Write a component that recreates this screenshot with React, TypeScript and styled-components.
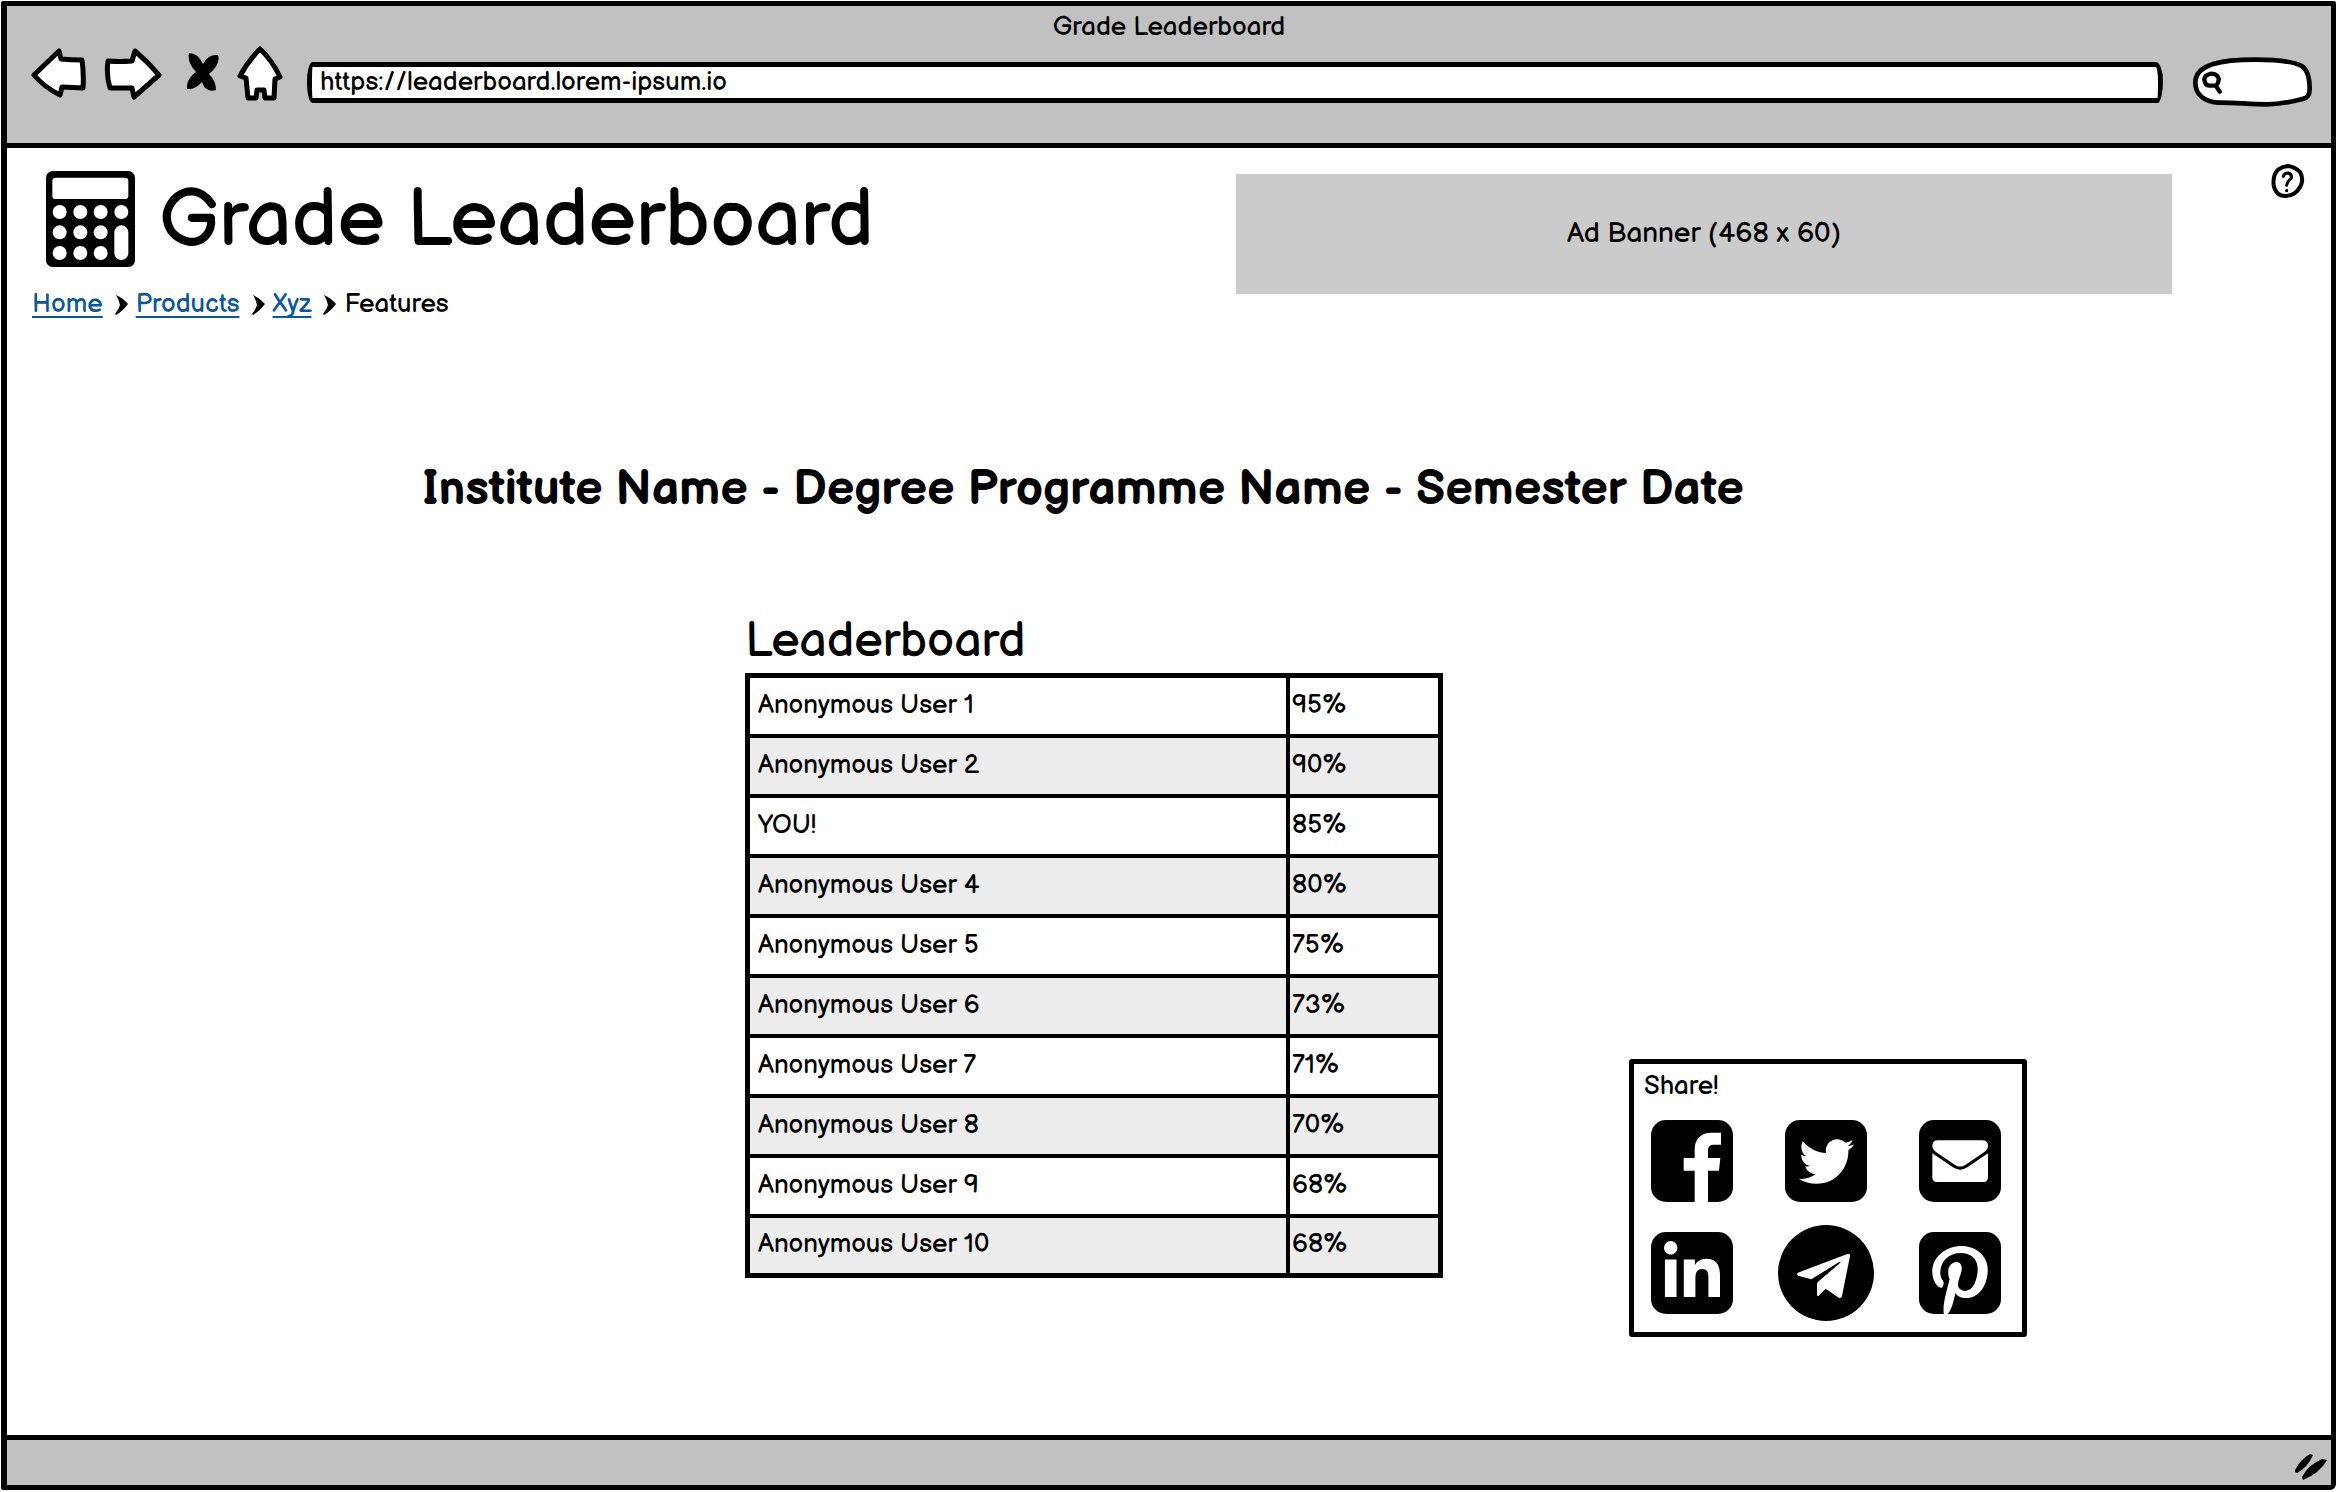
import React from "react";
import styled, { createGlobalStyle } from "styled-components";
import { FaTwitter, FaLinkedinIn, FaPinterestP } from "react-icons/fa";

const ink = "#000";
const chrome = "#c1c1c1";
const stripe = "#ededed";
const link = "#0b5599";

const GlobalStyle = createGlobalStyle`
  *, *::before, *::after { box-sizing: border-box; }
  body {
    margin: 0;
    background: #fff;
    color: ${ink};
    font-family: "Balsamiq Sans", Lato, "Open Sans", sans-serif;
    font-size: 26px;
    line-height: 32px;
  }
  button, input { font: inherit; color: inherit; }
  h1, h2, p { margin: 0; }
`;

const Page = styled.div`
  display: flex;
  min-height: 100vh;
  padding: 1px 2px 2px 1px;
`;

const Window = styled.div`
  display: flex;
  flex: 1;
  flex-direction: column;
  border: solid ${ink};
  border-width: 5px 5px 5px 6px;
  border-radius: 2px 2px 6px 2px;
  background: #fff;
`;

const Chrome = styled.header`
  background: ${chrome};
  border-bottom: 5px solid ${ink};
  padding: 6px 0 31px;
`;

const WindowTitle = styled.p`
  text-align: center;
`;

const Toolbar = styled.div`
  display: flex;
  align-items: center;
  margin-top: 8px;
  padding: 0 19px 0 24px;
  height: 60px;
`;

const ToolGroup = styled.div`
  display: flex;
  align-items: center;
  gap: 17px;
  margin-right: 24px;
  padding-bottom: 17px;
`;

const IconButton = styled.button<{ $stop?: boolean }>`
  display: flex;
  padding: 0;
  border: 0;
  background: none;
  cursor: pointer;
  margin: ${(p) => (p.$stop ? "0 0 4px 8px" : "0")};
`;

const UrlInput = styled.input`
  flex: 1;
  min-width: 0;
  height: 41px;
  padding: 0 8px;
  border: 5px solid ${ink};
  border-radius: 6px 8px 6px 6px / 20px 20px 24px 20px;
  background: #fff;
  outline: none;
`;

const SearchBox = styled.label`
  position: relative;
  display: flex;
  align-items: center;
  width: 119px;
  height: 50px;
  margin-left: 30px;
  padding-left: 9px;
`;

const SearchInput = styled.input`
  position: relative;
  width: 76px;
  height: 28px;
  padding: 0;
  border: 0;
  background: transparent;
  outline: none;
`;

const Body = styled.main`
  flex: 1;
`;

const Masthead = styled.div`
  display: grid;
  grid-template-columns: 1229fr 936fr 159fr;
`;

const Brand = styled.div`
  padding-top: 23px;
`;

const BrandRow = styled.div`
  display: flex;
  align-items: center;
  gap: 24px;
  padding-left: 39px;
`;

const SiteName = styled.h1`
  padding-top: 4px;
  font-size: 80px;
  font-weight: 400;
  line-height: 92px;
  white-space: nowrap;
`;

const Crumbs = styled.nav`
  display: flex;
  align-items: center;
  gap: 8px;
  margin-top: 22px;
  padding-left: 25px;
`;

const Crumb = styled.a`
  color: ${link};
  text-decoration: underline;
  text-decoration-thickness: 2px;
  text-underline-offset: 4px;
  text-decoration-skip-ink: none;
`;

const AdBanner = styled.aside`
  display: flex;
  align-items: center;
  justify-content: center;
  height: 120px;
  margin-top: 26px;
  background: #cbcbcb;
  font-size: 28px;
`;

const HelpCell = styled.div`
  display: flex;
  align-items: flex-start;
  justify-content: flex-end;
  padding: 15px 26px 0 0;
`;

const CourseTitle = styled.h2`
  margin-top: 139px;
  padding-right: 172px;
  font-size: 48px;
  font-weight: 700;
  line-height: 60px;
  text-align: center;
`;

const Columns = styled.div`
  display: grid;
  grid-template-columns: 738fr 698fr 186fr 398fr 304fr;
  margin-top: 92px;
  padding-bottom: 40px;
`;

const Board = styled.section`
  grid-column: 2;
`;

const BoardTitle = styled.h2`
  font-size: 48px;
  font-weight: 400;
  line-height: 60px;
`;

const Table = styled.table`
  width: 100%;
  margin-top: 1px;
  border: 5px solid ${ink};
  border-collapse: collapse;
  table-layout: fixed;
`;

const NameCol = styled.col`
  width: 78%;
`;

const Row = styled.tr`
  height: 60px;
  &:nth-child(even) { background: ${stripe}; }
`;

const Cell = styled.td<{ $inset: number }>`
  padding: 0 0 0 ${(p) => p.$inset}px;
  border: 4px solid ${ink};
`;

const Share = styled.section`
  grid-column: 4;
  align-self: end;
  height: 278px;
  margin-bottom: -59px;
  padding: 7px 10px;
  border: 5px solid ${ink};
  border-radius: 3px;
`;

const ShareGrid = styled.div`
  display: grid;
  grid-template-columns: repeat(3, 96px);
  grid-auto-rows: 96px;
  gap: 16px 38px;
  margin-top: 10px;
  place-items: center;
`;

const ShareButton = styled.button<{ $round?: boolean }>`
  display: flex;
  align-items: center;
  justify-content: center;
  width: ${(p) => (p.$round ? 96 : 82)}px;
  height: ${(p) => (p.$round ? 96 : 82)}px;
  padding: 0;
  overflow: hidden;
  border: 0;
  border-radius: ${(p) => (p.$round ? "50%" : "15px")};
  background: ${ink};
  color: #fff;
  cursor: pointer;
`;

const PinMark = styled(FaPinterestP)`
  width: 56px;
  height: 74px;
  margin-top: 18px;
`;

const StatusBar = styled.footer`
  display: flex;
  align-items: center;
  justify-content: flex-end;
  height: 50px;
  padding: 8px 4px 0 0;
  border-top: 5px solid ${ink};
  background: ${chrome};
`;

const PillShape = styled.svg`
  position: absolute;
  inset: 0;
  width: 100%;
  height: 100%;
`;

const Glass = styled.svg`
  position: relative;
`;

const outline = {
  fill: "#fff",
  stroke: ink,
  strokeWidth: 5,
  strokeLinejoin: "round" as const,
  strokeLinecap: "round" as const,
};

const BackIcon = () => (
  <svg width="56" height="52" viewBox="31 48 56 52" {...outline}>
    <path d="M34 75 L59 51 L61 59 Q71 60 82 60 Q84 74 83 88 L62 87 L60 95 Q44 87 34 75Z" />
  </svg>
);

const ForwardIcon = () => (
  <svg width="58" height="54" viewBox="105 47 58 54" {...outline}>
    <path d="M109 61 Q120 62 133 61 L136 51 Q149 62 160 75 L135 97 L133 88 L111 88 Q107 75 109 61Z" />
  </svg>
);

const StopIcon = () => (
  <svg width="33" height="40" viewBox="188 51 33 40" fill={ink}>
    <path d="M190 52 Q199 52 204 63 Q209 53 219 54 Q222 63 210 73 Q217 80 217 89 Q206 92 203 81 Q196 89 188 88 Q187 78 197 71 Q188 62 190 52Z" />
  </svg>
);

const HomeIcon = () => (
  <svg width="46" height="55" viewBox="237 46 46 55" {...outline}>
    <path d="M260 49 Q272 60 280 77 L275 79 L274 98 L265 98 L264 90 L257 90 L256 98 L248 98 L246 78 L240 76 Q248 61 260 49Z" />
  </svg>
);

const SearchOutline = () => (
  <PillShape viewBox="400 170 356 150" preserveAspectRatio="none" aria-hidden="true">
    <path
      d="M475 307 C430 302 407 280 407 247 C407 190 490 178 586 178 C640 178 700 183 725 197 C746 210 749 240 749 266 C749 284 743 293 730 295 C690 306 660 312 620 312 C570 312 520 306 475 307Z"
      fill="#fff"
      stroke={ink}
      strokeWidth="14"
      strokeLinejoin="round"
    />
  </PillShape>
);

const SearchIcon = () => (
  <Glass width="20" height="23" viewBox="425 220 60 69" fill="none" stroke={ink} strokeWidth="13" strokeLinecap="round" strokeLinejoin="round">
    <path d="M453 228 Q432 232 432 246 Q434 263 447 264 H468 Q476 254 475 243 Q472 229 453 228Z M468 266 L478 282" />
  </Glass>
);

const HelpIcon = () => (
  <svg width="34" height="36" viewBox="635 489 102 108" fill="none" stroke={ink} strokeLinecap="round" strokeLinejoin="round">
    <path strokeWidth="12" d="M686 498 Q706 500 722 516 Q734 536 724 558 Q708 588 678 588 Q650 588 643 556 Q640 524 656 509 Q670 499 686 498Z" />
    <path strokeWidth="9" d="M672 529 Q674 519 687 519 Q698 522 696 534 Q683 546 682 556 M682 571 V572" />
  </svg>
);

const CalculatorIcon = () => (
  <svg width="89" height="96" viewBox="0 0 267 288">
    <rect width="267" height="288" rx="20" fill={ink} />
    <g fill="#fff">
      <rect x="19" y="20" width="228" height="64" rx="10" />
      {[41, 103, 164].map((x) =>
        [123, 184, 246].map((y) => <circle key={`${x}-${y}`} cx={x} cy={y} r="21" />)
      )}
      <circle cx="226" cy="123" r="21" />
      <rect x="205" y="163" width="42" height="104" rx="21" />
    </g>
  </svg>
);

const ChevronShape = styled.svg`
  margin-left: 4px;
`;

const Chevron = () => (
  <ChevronShape width="13" height="20" viewBox="0 0 13 20" fill={ink} aria-hidden="true">
    <path d="M1 0 Q8 3 13 9 Q8 16 1 20 L0 19 Q4 14 5 10 Q4 5 1 0Z" />
  </ChevronShape>
);

const FacebookMark = () => (
  <svg width="82" height="82" viewBox="150 238 246 246" fill="currentColor">
    <path d="M281 484V390H248V352H281V328C281 294 300 276 332 276H360V312H342C326 312 321 317 321 330V352H358L354 390H321V484Z" />
  </svg>
);

const MailMark = () => (
  <svg width="82" height="82" viewBox="954 238 246 246" fill="currentColor">
    <path d="M1011 299H1144Q1161 299 1161 316Q1161 326 1151 333L1094 372Q1077 383 1061 372L1004 333Q994 326 994 316Q994 299 1011 299Z" />
    <path d="M994 338L1056 380Q1077 394 1099 380L1161 338V410Q1161 424 1147 424H1008Q994 424 994 410Z" />
  </svg>
);

const PlaneMark = () => (
  <svg width="96" height="96" viewBox="534 554 288 288" fill="currentColor">
    <path d="M594 697L744 640Q751 639 750 647L726 767Q724 775 716 772L677 745L656 766Q651 769 651 763V730Q652 726 656 723L721 667Q723 662 717 665L634 717L594 706Q588 701 594 697Z" />
  </svg>
);

const GripIcon = () => (
  <svg width="32" height="26" viewBox="0 0 32 26" fill={ink} aria-hidden="true">
    <path d="M0 16 Q6 5 15 0 L18 1 Q13 13 2 19 L0 18Z M7 23 Q13 11 27 5 L32 6 Q25 19 8 26Z" />
  </svg>
);

const scores: [string, string][] = [
  ["Anonymous User 1", "95%"],
  ["Anonymous User 2", "90%"],
  ["YOU!", "85%"],
  ["Anonymous User 4", "80%"],
  ["Anonymous User 5", "75%"],
  ["Anonymous User 6", "73%"],
  ["Anonymous User 7", "71%"],
  ["Anonymous User 8", "70%"],
  ["Anonymous User 9", "68%"],
  ["Anonymous User 10", "68%"],
];

const shares = [
  { name: "Facebook", mark: <FacebookMark /> },
  { name: "Twitter", mark: <FaTwitter size={55} /> },
  { name: "Email", mark: <MailMark /> },
  { name: "LinkedIn", mark: <FaLinkedinIn size={64} /> },
  { name: "Telegram", mark: <PlaneMark />, round: true },
  { name: "Pinterest", mark: <PinMark /> },
];

export default function App() {
  return (
    <Page>
      <GlobalStyle />
      <Window>
        <Chrome>
          <WindowTitle>Grade Leaderboard</WindowTitle>
          <Toolbar>
            <ToolGroup>
              <IconButton aria-label="Back"><BackIcon /></IconButton>
              <IconButton aria-label="Forward"><ForwardIcon /></IconButton>
              <IconButton aria-label="Stop" $stop><StopIcon /></IconButton>
              <IconButton aria-label="Home"><HomeIcon /></IconButton>
            </ToolGroup>
            <UrlInput aria-label="Address" type="text" defaultValue="https://leaderboard.lorem-ipsum.io" />
            <SearchBox>
              <SearchOutline />
              <SearchIcon />
              <SearchInput type="text" aria-label="Search" />
            </SearchBox>
          </Toolbar>
        </Chrome>
        <Body>
          <Masthead>
            <Brand>
              <BrandRow>
                <CalculatorIcon />
                <SiteName>Grade Leaderboard</SiteName>
              </BrandRow>
              <Crumbs aria-label="Breadcrumb">
                <Crumb href="#home">Home</Crumb>
                <Chevron />
                <Crumb href="#products">Products</Crumb>
                <Chevron />
                <Crumb href="#xyz">Xyz</Crumb>
                <Chevron />
                <span>Features</span>
              </Crumbs>
            </Brand>
            <AdBanner>Ad Banner (468 x 60)</AdBanner>
            <HelpCell>
              <IconButton aria-label="Help"><HelpIcon /></IconButton>
            </HelpCell>
          </Masthead>
          <CourseTitle>Institute Name - Degree Programme Name - Semester Date</CourseTitle>
          <Columns>
            <Board>
              <BoardTitle id="board-title">Leaderboard</BoardTitle>
              <Table aria-labelledby="board-title">
                <colgroup>
                  <NameCol />
                  <col />
                </colgroup>
                <tbody>
                  {scores.map(([name, score]) => (
                    <Row key={name}>
                      <Cell $inset={8}>{name}</Cell>
                      <Cell $inset={2}>{score}</Cell>
                    </Row>
                  ))}
                </tbody>
              </Table>
            </Board>
            <Share>
              <p>Share!</p>
              <ShareGrid>
                {shares.map((s) => (
                  <ShareButton key={s.name} aria-label={s.name} $round={s.round}>
                    {s.mark}
                  </ShareButton>
                ))}
              </ShareGrid>
            </Share>
          </Columns>
        </Body>
        <StatusBar>
          <GripIcon />
        </StatusBar>
      </Window>
    </Page>
  );
}
